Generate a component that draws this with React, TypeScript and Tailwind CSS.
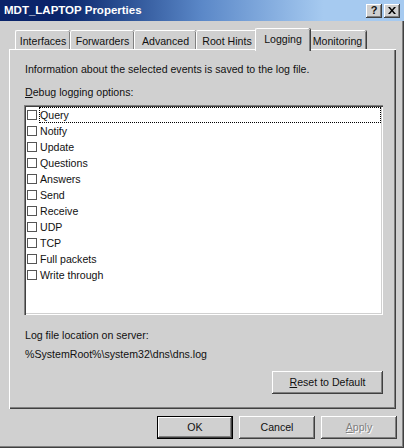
import React from 'react'

const raised =
  'shadow-[inset_-1px_-1px_0_#404040,inset_1px_1px_0_#ffffff,inset_-2px_-2px_0_#808080]'

const tabs = [
  { label: 'Interfaces', w: 'w-[55px]' },
  { label: 'Forwarders', w: 'w-[64px]' },
  { label: 'Advanced', w: 'w-[62px]' },
  { label: 'Root Hints', w: 'w-[61px]' },
  { label: 'Logging', w: 'w-[55px]', active: true },
  { label: 'Monitoring', w: 'w-[58px]' },
]

const options = [
  'Query',
  'Notify',
  'Update',
  'Questions',
  'Answers',
  'Send',
  'Receive',
  'UDP',
  'TCP',
  'Full packets',
  'Write through',
]

function Tab({ label, w, active }: { label: string; w: string; active?: boolean }) {
  if (active) {
    return (
      <div
        className={`${w} relative z-10 -mx-[2px] -mb-[2px] flex h-[23px] items-start justify-center rounded-t-[2px] border-l border-t border-white bg-[#d0d0d0] pt-[4px] shadow-[inset_-1px_0_0_#808080,1px_0_0_#404040]`}
      >
        {label}
      </div>
    )
  }
  return (
    <div
      className={`${w} flex h-[19px] items-start justify-center rounded-t-[2px] border-l border-t border-white pt-[4px] shadow-[inset_-1px_0_0_#808080,1px_0_0_#404040]`}
    >
      {label}
    </div>
  )
}

function Button({ children, w, className = '' }: { children: React.ReactNode; w: string; className?: string }) {
  return (
    <div className={`${w} flex h-[23px] items-center justify-center ${raised} ${className}`}>{children}</div>
  )
}

export default function App() {
  return (
    <div className="flex h-[448px] w-[404px] flex-col bg-[#d0d0d0] font-['Liberation_Sans',Arial,sans-serif] text-[10.6px] leading-[13px] text-[#111] shadow-[inset_-1px_-1px_0_#404040,inset_-2px_-2px_0_#808080]">
      <div className="flex h-[21px] items-center bg-gradient-to-r from-[#0a246a] from-15% via-[#5b88c8] via-50% to-[#a6caf0] to-80% pr-[4px]">
        <span className="pl-[4px] text-[11.5px] font-bold text-white">MDT_LAPTOP Properties</span>
        <div className="ml-auto flex gap-[2px]">
          <div className={`flex h-[14px] w-[16px] items-center justify-center bg-[#d0d0d0] text-[11px] font-bold ${raised}`}>?</div>
          <div className={`flex h-[14px] w-[16px] items-center justify-center bg-[#d0d0d0] ${raised}`}>
            <svg width="8" height="7" viewBox="0 0 8 7">
              <path d="M0 0h2l2 2.5L6 0h2L5 3.5 8 7H6L4 4.5 2 7H0l3-3.5z" fill="#000" />
            </svg>
          </div>
        </div>
      </div>

      <div className="mt-[7px] flex h-[21px] items-end pl-[15px]">
        {tabs.map((t) => (
          <Tab key={t.label} {...t} />
        ))}
      </div>

      <div className="ml-[9px] flex h-[360px] w-[387px] flex-col pl-[15px] pr-[13px] pt-[14px] shadow-[inset_1px_1px_0_#ffffff,inset_-1px_-1px_0_#404040,inset_-2px_-2px_0_#808080]">
        <div className="pl-[1px]">Information about the selected events is saved to the log file.</div>
        <div className="mt-[10px] pl-[1px]">
          <span className="underline">D</span>ebug logging options:
        </div>
        <div className="mt-[6px] h-[210px] w-[359px] bg-white p-[2px] shadow-[inset_1px_1px_0_#808080,inset_2px_2px_0_#404040,inset_-1px_-1px_0_#ffffff,inset_-2px_-2px_0_#d0d0d0]">
          {options.map((o, i) => (
            <div key={o} className="flex h-[16px] items-center pl-[1px]">
              <div className="h-[10px] w-[10px] shrink-0 border border-[#555]" />
              <div
                className={`ml-[2px] flex h-[16px] flex-1 items-center ${
                  i === 0 ? 'border border-dotted border-black' : 'border border-transparent'
                }`}
              >
                {o}
              </div>
            </div>
          ))}
        </div>
        <div className="mt-[14px] pl-[1px]">Log file location on server:</div>
        <div className="mt-[6px] pl-[1px]">%SystemRoot%\system32\dns\dns.log</div>
        <div className="mt-[10px] flex justify-end">
          <Button w="w-[111px]">
            <span>
              <span className="underline">R</span>eset to Default
            </span>
          </Button>
        </div>
      </div>

      <div className="mt-[7px] flex justify-end gap-[6px] pr-[7px]">
        <Button w="w-[76px]" className="shadow-[inset_0_0_0_1px_#000,inset_-2px_-2px_0_#404040,inset_2px_2px_0_#ffffff,inset_-3px_-3px_0_#808080]">
          OK
        </Button>
        <Button w="w-[76px]">Cancel</Button>
        <Button w="w-[76px]" className="text-[#808080] [text-shadow:1px_1px_0_#ffffff]">
          <span>
            <span className="underline">A</span>pply
          </span>
        </Button>
      </div>
    </div>
  )
}
